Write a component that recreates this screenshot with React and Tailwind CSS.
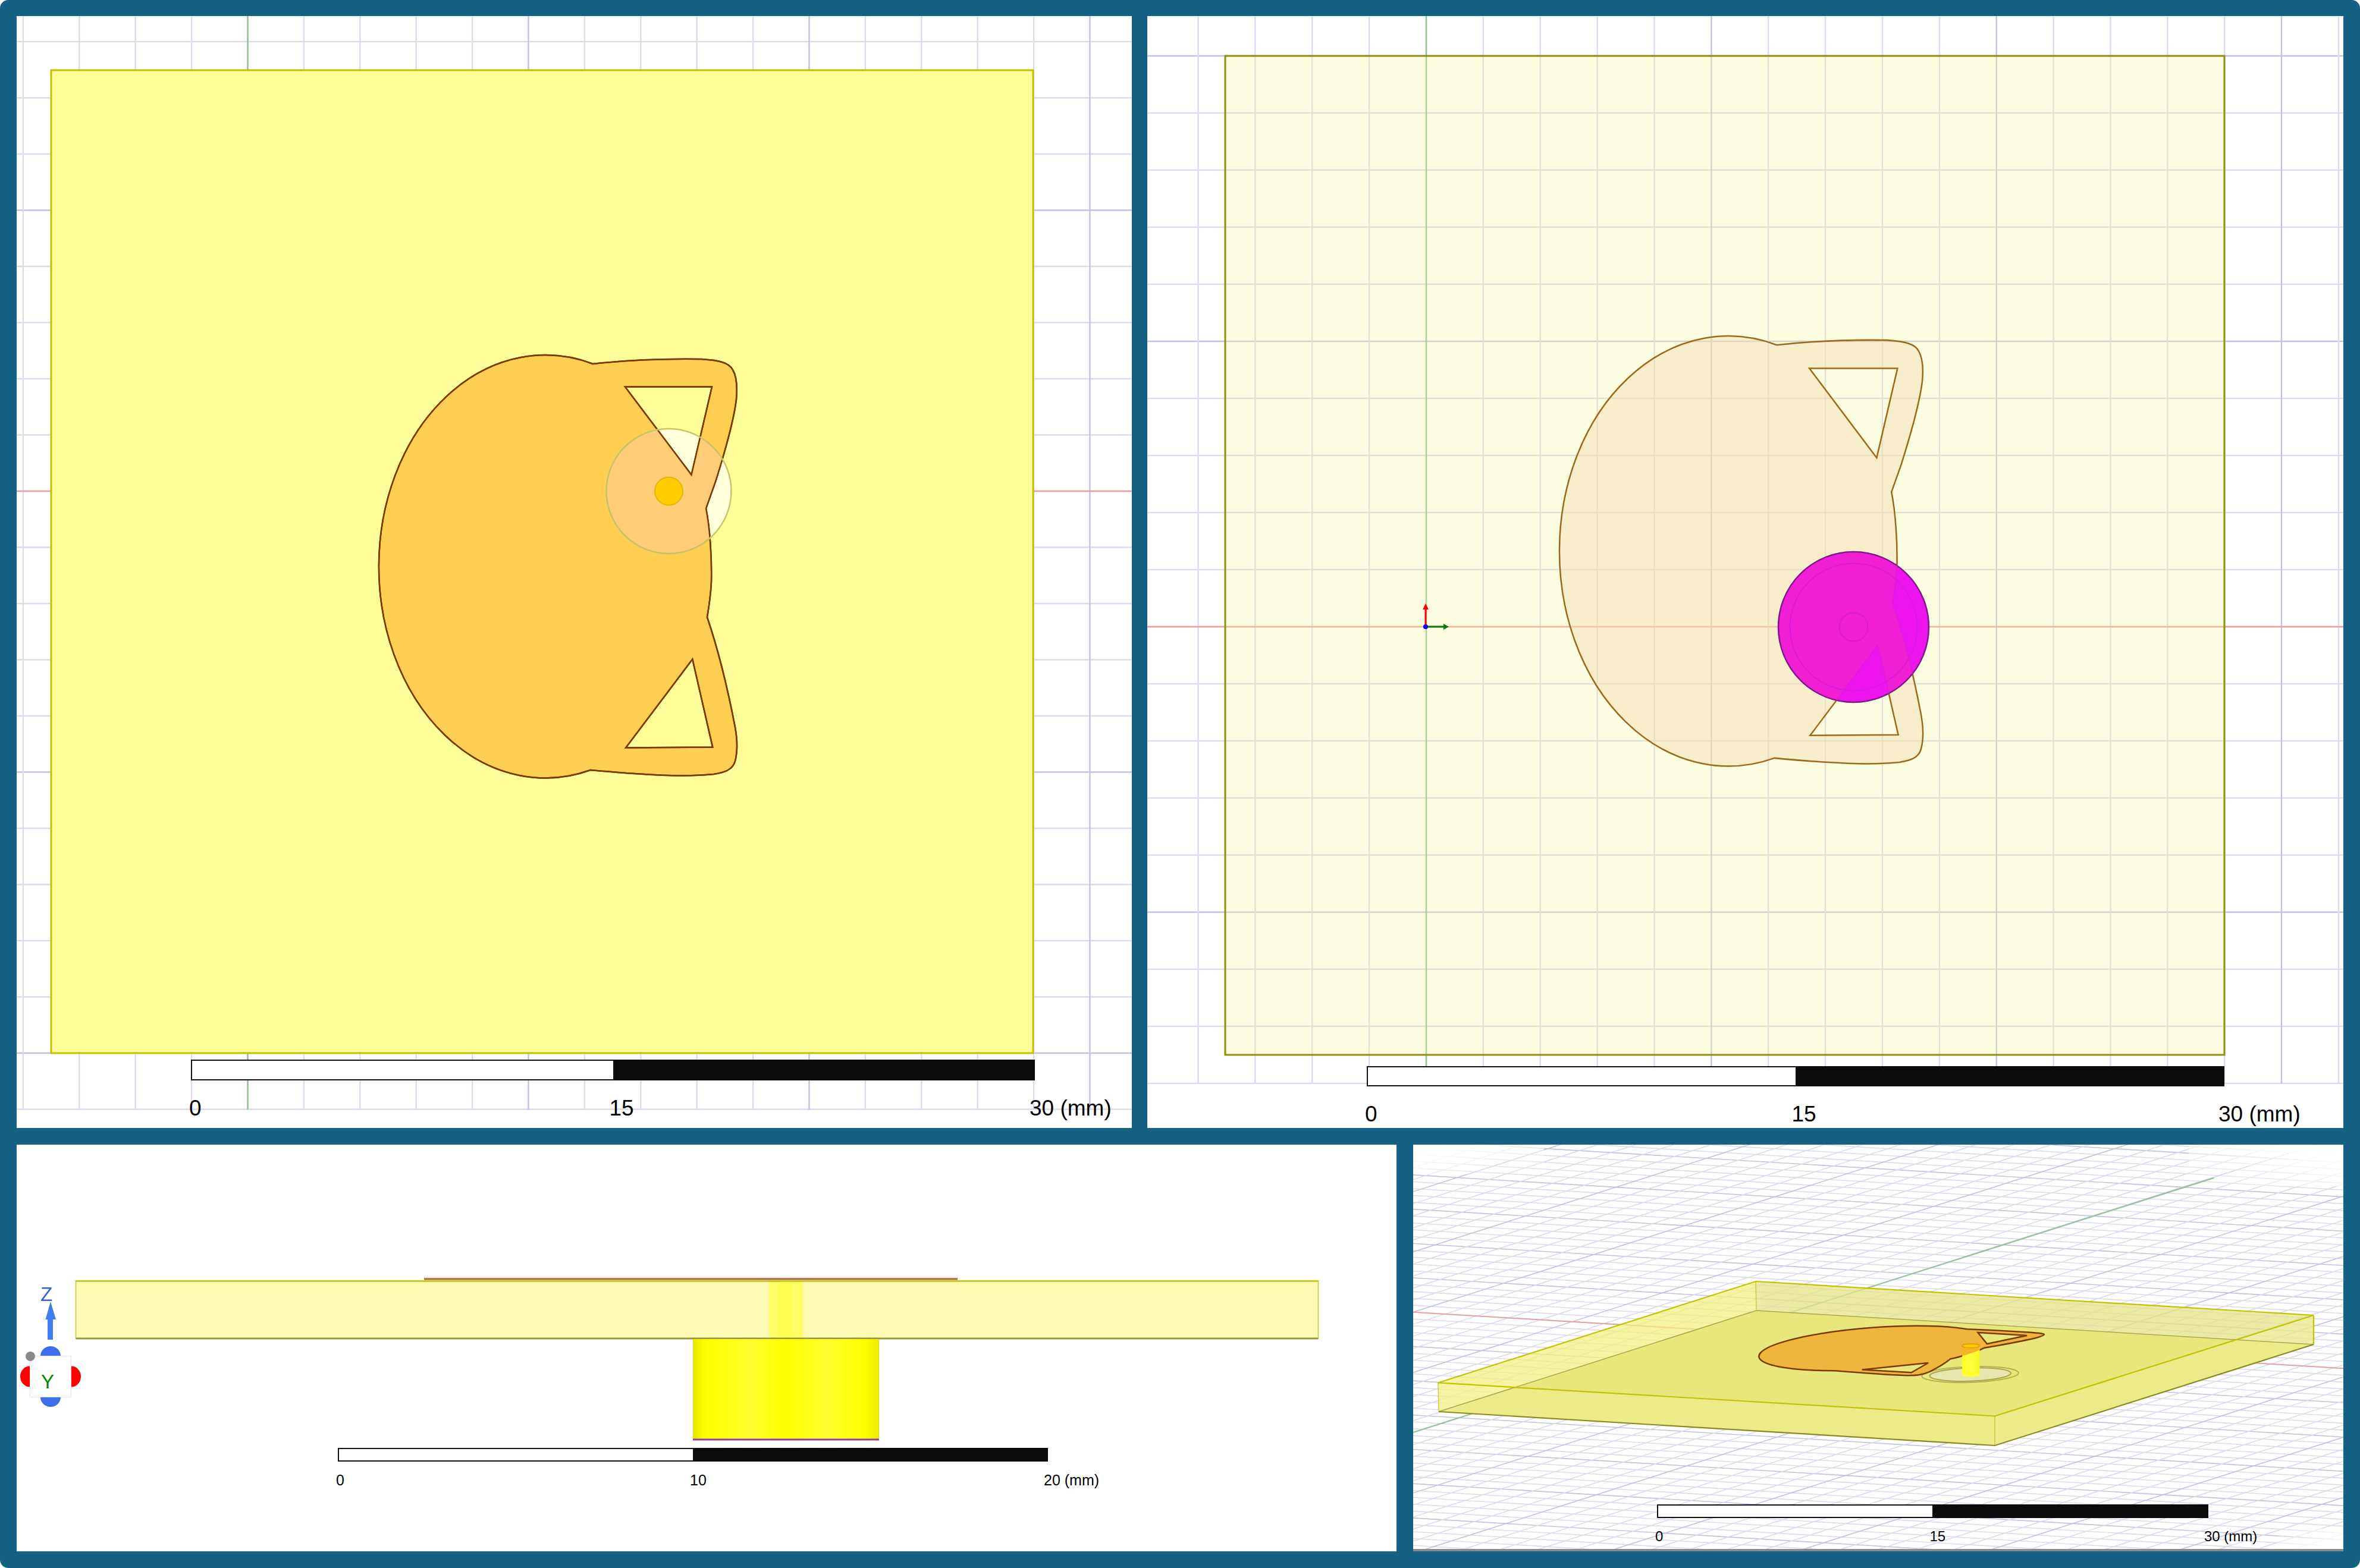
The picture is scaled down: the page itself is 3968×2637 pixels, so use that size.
const PATCH =
  'M997 612 C1060 605 1120 603 1180 604 C1210 606 1226 610 1232 622 C1238 632 1240 650 1238 672 C1234 705 1222 750 1203 810 L1187 855 ' +
  'C1194 890 1197 940 1196 979 C1195 1000 1192 1020 1189 1038 C1205 1085 1222 1150 1236 1223 C1240 1245 1240 1265 1236 1280 ' +
  'C1232 1295 1218 1299 1200 1302 C1150 1307 1090 1304 993 1295 A280 355.6 0 1 1 997 612 Z ' +
  'M1051 650.5 L1197 650.5 L1162.5 798.5 Z M1164.3 1108.7 L1198.2 1256.6 L1052.2 1257.6 Z';

const TR_MATRIX = 'translate(2622 565) scale(1.015 1.017) translate(-637 -597)';
const ISO_MATRIX = 'matrix(0.565 0.0342 -0.3217 0.1026 2941 2138.4)';
const ISO_GROUND = 'matrix(0.565 0.0342 -0.3217 0.1026 2943 2188.4)';

const MINOR = '#dddaee';
const MAJOR = '#c3c1e0';

const range = (a, b) => Array.from({ length: b - a + 1 }, (_, i) => a + i);

function FlatGrid({ x0, dx, kMin, kMax, y0, dy, jMin, jMax, jMajor, jAxis, left, right, top, bottom }) {
  const axisY = y0 + dy * jAxis;
  return (
    <g strokeWidth="2.4">
      {range(jMin, jMax).map((j) => (
        <line key={j} x1={left} x2={right} y1={y0 + dy * j} y2={y0 + dy * j} stroke={(j - jMajor) % 5 === 0 ? MAJOR : MINOR} />
      ))}
      {range(kMin, kMax).map((k) => (
        <line key={k} x1={x0 + dx * k} x2={x0 + dx * k} y1={top} y2={bottom} stroke={k % 5 === 0 ? MAJOR : MINOR} />
      ))}
      <line x1={left} x2={right} y1={axisY} y2={axisY} stroke="#eda0a0" />
      <line x1={x0} x2={x0} y1={top} y2={bottom} stroke="#94c494" />
    </g>
  );
}

function ScaleBar({ className, barClass, rowClass, labels }) {
  return (
    <div className={`absolute ${className}`}>
      <div className={`flex ${barClass}`}>
        <div className="flex-1 bg-white border-2 border-[#111]" />
        <div className="flex-1 bg-[#0b0b0b]" />
      </div>
      <div className={`flex leading-none text-black ${rowClass}`}>
        <span className="flex-1">{labels[0]}</span>
        <span className="flex-1">{labels[1]}</span>
        <span className="w-0 whitespace-nowrap">{labels[2]}</span>
      </div>
    </div>
  );
}

function TopView() {
  return (
    <svg className="block w-full h-full" viewBox="28 27 1875 1870">
      <defs>
        <clipPath id="tl-patch">
          <path d={PATCH} clipRule="evenodd" />
        </clipPath>
      </defs>
      <FlatGrid x0={416.5} dx={94.4} kMin={-4} kMax={15} y0={70} dy={94.5} jMin={0} jMax={19} jMajor={3} jAxis={8} left={28} right={1903} top={27} bottom={1866} />
      <rect x="86" y="118" width="1651" height="1653" fill="#ffff99" stroke="#c2c200" strokeWidth="3" />
      <circle cx="1124.5" cy="826" r="105" fill="#ffffdc" />
      <path d={PATCH} fillRule="evenodd" fill="#ffcf53" stroke="#7a3b00" strokeWidth="2.5" />
      <circle cx="1124.5" cy="826" r="105" fill="#ffcc78" clipPath="url(#tl-patch)" />
      <path d={PATCH} fillRule="evenodd" fill="none" stroke="#7a3b00" strokeWidth="2.5" />
      <circle cx="1124.5" cy="826" r="105" fill="none" stroke="#c8c468" strokeWidth="2.5" />
      <circle cx="1124.5" cy="826" r="23.5" fill="#ffcc00" stroke="#e2b810" strokeWidth="2" />
    </svg>
  );
}

function BottomView() {
  return (
    <svg className="block w-full h-full" viewBox="1929 27 2011 1870">
      <defs>
        <clipPath id="tr-patch">
          <path d={PATCH} clipRule="evenodd" transform={TR_MATRIX} />
        </clipPath>
        <clipPath id="tr-disc">
          <circle cx="3116.5" cy="1054.5" r="126.5" />
        </clipPath>
      </defs>
      <FlatGrid x0={2398} dx={95.87} kMin={-4} kMax={16} y0={94} dy={96} jMin={0} jMax={18} jMajor={0} jAxis={10} left={1929} right={3940} top={27} bottom={1822} />
      <rect x="2060" y="94" width="1680" height="1680" fill="#f5f598" fillOpacity="0.3" stroke="#8f8f10" strokeWidth="3" />
      <path d={PATCH} transform={TR_MATRIX} fillRule="evenodd" fill="#f7ddb2" fillOpacity="0.45" stroke="#9c6a1c" strokeWidth="2.5" />
      <circle cx="3116.5" cy="1054.5" r="126.5" fill="#ee14ee" stroke="#7e1a86" strokeWidth="2.5" />
      <circle cx="3116.5" cy="1054.5" r="125" fill="#f01fd4" clipPath="url(#tr-patch)" />
      <g clipPath="url(#tr-disc)">
        <path d={PATCH} transform={TR_MATRIX} fillRule="evenodd" fill="none" stroke="#dc1cdc" strokeWidth="2" />
      </g>
      <circle cx="3116.5" cy="1054.5" r="107" fill="none" stroke="#d91ad9" strokeWidth="2" />
      <circle cx="3116.5" cy="1054.5" r="24" fill="none" stroke="#d91ad9" strokeWidth="2" />
      <line x1="2397" x2="2397" y1="1054" y2="1024" stroke="#ff0000" strokeWidth="3" />
      <path d="M2397 1015 L2392 1025 L2402 1025 Z" fill="#ff0000" />
      <line x1="2397" x2="2428" y1="1054" y2="1054" stroke="#0a7a0a" strokeWidth="3" />
      <path d="M2436 1054 L2427 1049 L2427 1059 Z" fill="#0a7a0a" />
      <circle cx="2397" cy="1054" r="4" fill="#0000ff" />
    </svg>
  );
}

function SideView() {
  return (
    <svg className="block w-full h-full" viewBox="28 1925 2320 684">
      <defs>
        <linearGradient id="cyl" x1="0" x2="1" y1="0" y2="0">
          <stop offset="0" stopColor="#e6e600" />
          <stop offset="0.07" stopColor="#ffff00" />
          <stop offset="0.32" stopColor="#ffff30" />
          <stop offset="0.5" stopColor="#ffff00" />
          <stop offset="0.72" stopColor="#ffff30" />
          <stop offset="0.92" stopColor="#ffff00" />
          <stop offset="1" stopColor="#eaea00" />
        </linearGradient>
      </defs>
      <rect x="713" y="2147" width="897" height="2.5" fill="#f0e6df" />
      <rect x="713" y="2149.5" width="897" height="3" fill="#a2643c" />
      <rect x="127.5" y="2154" width="2089" height="97" fill="#fafab2" stroke="#c8c832" strokeWidth="1.5" />
      <rect x="1293" y="2156" width="57" height="94" fill="#ffff66" />
      <rect x="1310" y="2156" width="22" height="94" fill="#ffff52" />
      <rect x="127.5" y="2153" width="2089" height="3" fill="#cccc1e" />
      <rect x="127.5" y="2249.5" width="2089" height="3" fill="#98983a" />
      <rect x="1165" y="2252" width="313" height="170" fill="url(#cyl)" />
      <rect x="1165" y="2419.5" width="313" height="3" fill="#9a3a9a" />
      {/* orientation triad */}
      <rect x="80" y="2219" width="9" height="34" fill="#3f7cf0" />
      <path d="M85 2189 L76.5 2219 L94 2219 Z" fill="#3f7cf0" />
      <text x="68" y="2188" fontSize="33" fill="#3a62d8">Z</text>
      <ellipse cx="85" cy="2280" rx="17" ry="16" fill="#3f6fe8" />
      <ellipse cx="85" cy="2350" rx="17" ry="16" fill="#3f6fe8" />
      <ellipse cx="50" cy="2315" rx="16" ry="17.5" fill="#ff0000" />
      <ellipse cx="120" cy="2315" rx="16" ry="17.5" fill="#ff0000" />
      <rect x="50.5" y="2280.5" width="69" height="69" fill="#fff" stroke="#dde8f2" strokeWidth="1" />
      <ellipse cx="51" cy="2281" rx="8" ry="8" fill="#8a8a8a" />
      <text x="69" y="2335" fontSize="33" fill="#008a00">Y</text>
    </svg>
  );
}

// one grid cell along each ground axis, in page pixels
const EX = [53.4, 3.23];
const EY = [30.4, -9.7];
const ORIGIN = [2910, 2239];

function gridLine(a1, b1, a2, b2) {
  return {
    x1: ORIGIN[0] + a1 * EX[0] + b1 * EY[0],
    y1: ORIGIN[1] + a1 * EX[1] + b1 * EY[1],
    x2: ORIGIN[0] + a2 * EX[0] + b2 * EY[0],
    y2: ORIGIN[1] + a2 * EX[1] + b2 * EY[1],
  };
}

function IsoView() {
  return (
    <svg className="block w-full flex-1 min-h-0" viewBox="2376 1925 1564 680">
      <defs>
        <clipPath id="iso-patch">
          <path d={PATCH} clipRule="evenodd" transform={ISO_MATRIX} />
        </clipPath>
        <linearGradient id="pin" x1="0" x2="1" y1="0" y2="0">
          <stop offset="0" stopColor="#ffff20" />
          <stop offset="0.5" stopColor="#ffff44" />
          <stop offset="1" stopColor="#f8f820" />
        </linearGradient>
        <linearGradient id="fade-tl" x1="0" x2="1" y1="0" y2="1">
          <stop offset="0.2" stopColor="#fff" stopOpacity="0.95" />
          <stop offset="1" stopColor="#fff" stopOpacity="0" />
        </linearGradient>
        <linearGradient id="fade-tr" x1="1" x2="0" y1="0" y2="1">
          <stop offset="0.2" stopColor="#fff" stopOpacity="0.95" />
          <stop offset="1" stopColor="#fff" stopOpacity="0" />
        </linearGradient>
        <linearGradient id="fade-br" x1="1" x2="0" y1="1" y2="0">
          <stop offset="0.2" stopColor="#fff" stopOpacity="0.95" />
          <stop offset="1" stopColor="#fff" stopOpacity="0" />
        </linearGradient>
      </defs>
      <g strokeWidth="1.6">
        {range(-36, 34).map((b) => (
          <line key={b} {...gridLine(-40, b, 40, b)} stroke={b % 5 === 0 ? MAJOR : MINOR} />
        ))}
        {range(-25, 36).map((a) => (
          <line key={a} {...gridLine(a, -60, a, 60)} stroke={a % 5 === 0 ? MAJOR : MINOR} />
        ))}
      </g>
      <rect x="2376" y="1925" width="220" height="50" fill="url(#fade-tl)" />
      <rect x="3680" y="1925" width="260" height="70" fill="url(#fade-tr)" />
      <rect x="3830" y="2570" width="110" height="35" fill="url(#fade-br)" />
      <line x1="2376" y1="2206.7" x2="3940" y2="2301.3" stroke="#eda0a0" strokeWidth="2" />
      <line x1="2376" y1="2408.7" x2="3722.6" y2="1981" stroke="#94c494" strokeWidth="2" />

      <path d="M2952 2155 L2418 2325.5 L2419 2374 L2953 2204 Z" fill="#f0f082" fillOpacity="0.75" />
      <path d="M2952 2155 L3890 2212 L3890 2261 L2953 2204 Z" fill="#e4e488" fillOpacity="0.75" />
      <path d="M2953 2204 L3890 2261 L3354 2431 L2419 2374 Z" fill="#e7e77b" />
      <path d="M2418 2325.5 L3354 2381.5 L3354 2431 L2419 2374 Z" fill="#f4f4a4" fillOpacity="0.35" />
      <path d="M3354 2381.5 L3890 2212 L3890 2261 L3354 2431 Z" fill="#f4f4a4" fillOpacity="0.35" />

      <g fill="none" strokeWidth="1.5" stroke="#a8a850">
        <path d="M2953 2204 L2419 2374 M2953 2204 L3890 2261" />
      </g>
      <g fill="none" strokeWidth="1.5" stroke="#cccc40">
        <path d="M2952 2155 L2953 2204 M2418 2325.5 L2419 2374 M3890 2212 L3890 2261 M3354 2381.5 L3354 2431" />
      </g>

      <circle cx="1124.5" cy="826" r="125" transform={ISO_GROUND} fill="none" stroke="#b4b450" strokeWidth="2" vectorEffect="non-scaling-stroke" />
      <circle cx="1124.5" cy="826" r="105" transform={ISO_GROUND} fill="#e6e6ae" stroke="#a8a850" strokeWidth="2" vectorEffect="non-scaling-stroke" />

      <path d={PATCH} transform={ISO_MATRIX} fillRule="evenodd" fill="#f0b53f" stroke="#7a3a00" strokeWidth="2.5" vectorEffect="non-scaling-stroke" />

      <rect x="3299" y="2263" width="29.5" height="49" fill="url(#pin)" />
      <ellipse cx="3313.6" cy="2312" rx="14.7" ry="3.5" fill="#ffff33" />
      <rect x="3299" y="2263" width="29.5" height="49" fill="#f5b42a" clipPath="url(#iso-patch)" />
      <ellipse cx="3313.6" cy="2263.3" rx="14.7" ry="3.5" fill="#ffc800" stroke="#d89a00" strokeWidth="1.2" />

      <g fill="none" strokeWidth="2.2" stroke="#c2c200">
        <path d="M2952 2155 L3890 2212 L3354 2381.5 L2418 2325.5 Z M3890 2212 L3890 2261" />
      </g>
      <path d="M2419 2374 L3354 2431 L3890 2261" fill="none" stroke="#8a8a20" strokeWidth="2.2" />
    </svg>
  );
}

export default function App() {
  return (
    <div className="w-[3968px] h-[2637px] rounded-[14px] bg-[#156183] flex flex-col gap-[28px] pt-[27px] pb-[28px] px-[28px] font-['Liberation_Sans',Arial,sans-serif]">
      <div className="flex h-[1870px] gap-[26px]">
        <div className="relative w-[1875px] bg-white overflow-hidden">
          <TopView />
          <ScaleBar className="left-[293px] top-[1755px] w-[1419px]" barClass="h-[35px]" rowClass="mt-[28px] ml-[-3px] w-[1413px] text-[37px]" labels={['0', '15', '30 (mm)']} />
        </div>
        <div className="relative flex-1 bg-white overflow-hidden">
          <BottomView />
          <ScaleBar className="left-[369px] top-[1766px] w-[1442px]" barClass="h-[34px]" rowClass="mt-[28px] ml-[-3px] w-[1435px] text-[37px]" labels={['0', '15', '30 (mm)']} />
        </div>
      </div>
      <div className="flex flex-1 min-h-0 gap-[28px]">
        <div className="relative w-[2320px] bg-white overflow-hidden">
          <SideView />
          <ScaleBar className="left-[540px] top-[510px] w-[1194px]" barClass="h-[23px]" rowClass="mt-[19px] ml-[-3px] w-[1190px] text-[25px]" labels={['0', '10', '20 (mm)']} />
        </div>
        <div className="relative flex-1 flex flex-col bg-white overflow-hidden">
          <IsoView />
          <div className="h-[4px] bg-[#8a8a8a]" />
          <ScaleBar className="left-[410px] top-[605px] w-[926.5px]" barClass="h-[23px]" rowClass="mt-[19px] ml-[-3px] w-[923px] text-[24px]" labels={['0', '15', '30 (mm)']} />
        </div>
      </div>
    </div>
  );
}
